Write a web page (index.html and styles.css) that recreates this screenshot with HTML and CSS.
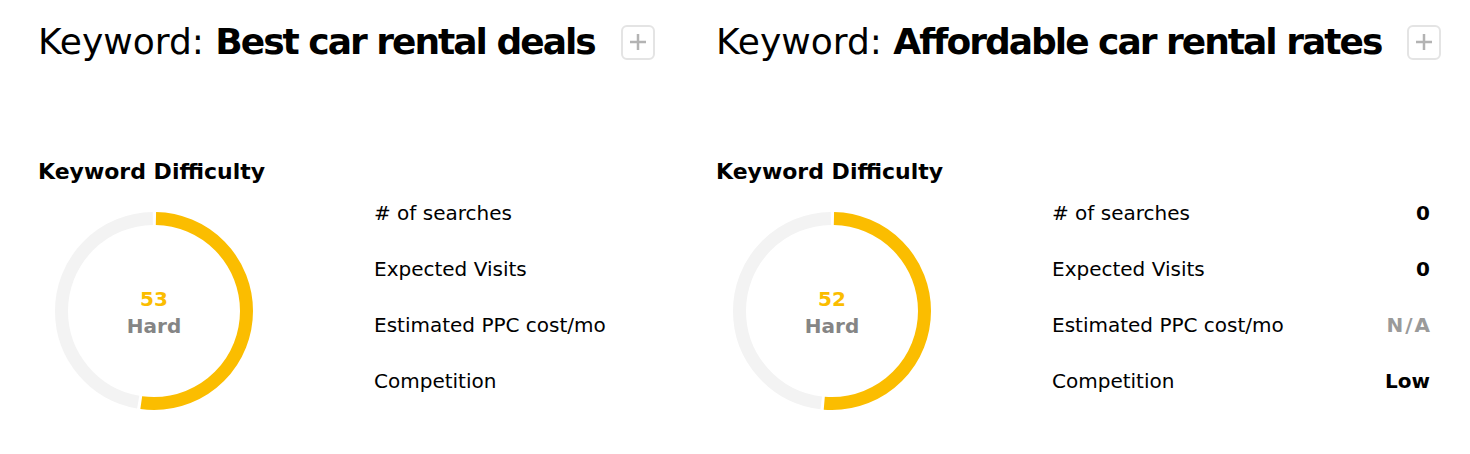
FILE: index.html
```html
<!DOCTYPE html>
<html lang="en">
<head>
<meta charset="utf-8">
<title>Keyword comparison</title>
<link rel="stylesheet" href="styles.css">
</head>
<body>
<div class="page">
  <section class="kw">
    <h1 class="kw-title"><span class="kw-label">Keyword:&nbsp;</span><strong class="kw-name">Best car rental deals</strong><span class="add-btn"><svg width="18" height="18" viewBox="0 0 18 18"><path d="M9 1V17M1 9H17" stroke="#b3b3b3" stroke-width="2.5" fill="none"/></svg></span></h1>
    <div class="kw-body">
      <div class="difficulty">
        <h2 class="difficulty-title">Keyword Difficulty</h2>
        <div class="donut">
          <svg class="donut-svg" width="198" height="198" viewBox="0 0 198 198">
            <g transform="rotate(-90 99 99)">
              <circle cx="99" cy="99" r="92.5" fill="none" stroke="#f3f3f3" stroke-width="13" stroke-dasharray="273 1000" stroke-dashoffset="-306"/>
              <circle cx="99" cy="99" r="92.5" fill="none" stroke="#fbbd00" stroke-width="13" stroke-dasharray="301 1000" stroke-dashoffset="-2"/>
            </g>
          </svg>
          <div class="donut-label">
            <span class="donut-score">53</span>
            <span class="donut-level">Hard</span>
          </div>
        </div>
      </div>
      <ul class="metrics">
        <li class="metric"><span class="metric-name"># of searches</span><span class="metric-value"></span></li>
        <li class="metric"><span class="metric-name">Expected Visits</span><span class="metric-value"></span></li>
        <li class="metric"><span class="metric-name">Estimated PPC cost/mo</span><span class="metric-value"></span></li>
        <li class="metric"><span class="metric-name">Competition</span><span class="metric-value"></span></li>
      </ul>
    </div>
  </section>
  <section class="kw">
    <h1 class="kw-title"><span class="kw-label">Keyword:&nbsp;</span><strong class="kw-name">Affordable car rental rates</strong><span class="add-btn"><svg width="18" height="18" viewBox="0 0 18 18"><path d="M9 1V17M1 9H17" stroke="#b3b3b3" stroke-width="2.5" fill="none"/></svg></span></h1>
    <div class="kw-body">
      <div class="difficulty">
        <h2 class="difficulty-title">Keyword Difficulty</h2>
        <div class="donut">
          <svg class="donut-svg" width="198" height="198" viewBox="0 0 198 198">
            <g transform="rotate(-90 99 99)">
              <circle cx="99" cy="99" r="92.5" fill="none" stroke="#f3f3f3" stroke-width="13" stroke-dasharray="278 1000" stroke-dashoffset="-301"/>
              <circle cx="99" cy="99" r="92.5" fill="none" stroke="#fbbd00" stroke-width="13" stroke-dasharray="296 1000" stroke-dashoffset="-2"/>
            </g>
          </svg>
          <div class="donut-label">
            <span class="donut-score">52</span>
            <span class="donut-level">Hard</span>
          </div>
        </div>
      </div>
      <ul class="metrics">
        <li class="metric"><span class="metric-name"># of searches</span><span class="metric-value">0</span></li>
        <li class="metric"><span class="metric-name">Expected Visits</span><span class="metric-value">0</span></li>
        <li class="metric"><span class="metric-name">Estimated PPC cost/mo</span><span class="metric-value metric-value-na">N/A</span></li>
        <li class="metric"><span class="metric-name">Competition</span><span class="metric-value">Low</span></li>
      </ul>
    </div>
  </section>
</div>
</body>
</html>
```

FILE: styles.css
```css
html, body {
  margin: 0;
  padding: 0;
  background: #ffffff;
}

body {
  font-family: "DejaVu Sans", "Liberation Sans", sans-serif;
  color: #000000;
}

.page {
  display: grid;
  grid-template-columns: 678px minmax(0, 1fr);
  padding: 21px 40px 0 38px;
}

.kw {
  min-width: 0;
}

.kw-title {
  display: flex;
  align-items: center;
  margin: 0;
  font-size: 36px;
  line-height: 42px;
  font-weight: normal;
  white-space: nowrap;
}

.kw-name {
  font-weight: bold;
  letter-spacing: -2px;
}

.add-btn {
  display: flex;
  flex: none;
  align-items: center;
  justify-content: center;
  box-sizing: border-box;
  width: 34px;
  height: 35px;
  margin-left: 26px;
  border: 2px solid #e4e4e4;
  border-radius: 6px;
}

.kw-body {
  display: flex;
  margin-top: 96px;
}

.difficulty {
  width: 336px;
  flex: none;
}

.difficulty-title {
  margin: 0;
  font-size: 22px;
  line-height: 26px;
  font-weight: bold;
}

.donut {
  display: grid;
  place-items: center;
  width: 198px;
  height: 198px;
  margin: 27px 0 0 17px;
}

.donut-svg,
.donut-label {
  grid-area: 1 / 1;
}

.donut-label {
  display: flex;
  flex-direction: column;
  align-items: center;
  padding-top: 4px;
  font-size: 20px;
  line-height: 27px;
  font-weight: bold;
}

.donut-score {
  color: #fbbd00;
}

.donut-level {
  color: #858585;
}

.metrics {
  flex: 1;
  list-style: none;
  margin: 0;
  padding: 26px 0 0;
}

.metric {
  display: flex;
  justify-content: space-between;
  height: 56px;
  line-height: 56px;
  font-size: 20px;
}

.metric-value {
  font-weight: bold;
}

.metric-value-na {
  color: #9a9a9a;
  letter-spacing: 2px;
  margin-right: -2px;
}
```
